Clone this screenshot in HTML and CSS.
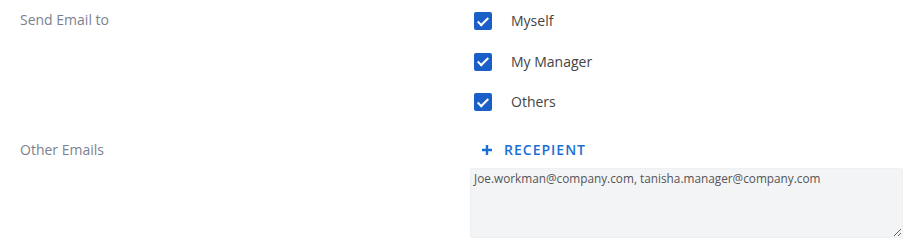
FILE: index.html
```html
<!DOCTYPE html>
<html lang="en">
<head>
    <meta charset="UTF-8">
    <title>Email Settings</title>
    <link rel="stylesheet" href="styles.css">
</head>
<body>
    <div class="settings">
        <div class="row">
            <div class="label">Send Email to</div>
            <div class="field checks">
                <label class="check"><input type="checkbox" checked><span class="box"></span>Myself</label>
                <label class="check"><input type="checkbox" checked><span class="box"></span>My Manager</label>
                <label class="check"><input type="checkbox" checked><span class="box"></span>Others</label>
            </div>
        </div>
        <div class="row">
            <div class="label">Other Emails</div>
            <div class="field">
                <button class="add-btn" type="button">
                    <svg width="12" height="12" viewBox="0 0 12 12"><path d="M6 1v10M1 6h10" stroke="#1a6fd6" stroke-width="2.4"/></svg>
                    RECEPIENT
                </button>
                <textarea class="emails">Joe.workman@company.com, tanisha.manager@company.com</textarea>
            </div>
        </div>
    </div>
</body>
</html>
```

FILE: styles.css
```css
body {
    margin: 0;
    font-family: "Open Sans", sans-serif;
    background: #fff;
}
.settings {
    padding: 10px 15px 0 20px;
}
.row {
    display: flex;
}
.label {
    width: 450px;
    font-size: 14px;
    color: #7b8190;
    line-height: 20px;
}
.field {
    flex: 1;
}
.checks {
    display: flex;
    flex-direction: column;
    gap: 20.5px;
    padding-top: 1px;
    padding-bottom: 28px;
}
.check {
    display: flex;
    align-items: center;
    font-size: 14px;
    color: #444;
    line-height: 20px;
    padding-left: 4px;
}
.check input {
    display: none;
}
.box {
    width: 18px;
    height: 18px;
    border-radius: 2px;
    background: #1a5fc8;
    margin-right: 19px;
    position: relative;
}
.box::after {
    content: "";
    position: absolute;
    left: 6px;
    top: 2.5px;
    width: 4px;
    height: 9px;
    border: solid #fff;
    border-width: 0 2px 2px 0;
    transform: rotate(45deg);
}
.add-btn {
    display: flex;
    align-items: center;
    gap: 11px;
    background: none;
    border: none;
    padding: 0 0 0 11px;
    font-family: "Open Sans", sans-serif;
    font-weight: 600;
    font-size: 14px;
    letter-spacing: 1px;
    color: #1a6fd6;
    line-height: 20px;
    margin-bottom: 8px;
}
.emails {
    display: block;
    box-sizing: border-box;
    width: 433px;
    height: 70px;
    background: #f3f4f6;
    border: 1px solid #eef0f2;
    border-radius: 2px;
    font-family: "Open Sans", sans-serif;
    font-size: 11.8px;
    color: #555;
    padding: 1px 3px;
    resize: both;
    outline: none;
}
```
